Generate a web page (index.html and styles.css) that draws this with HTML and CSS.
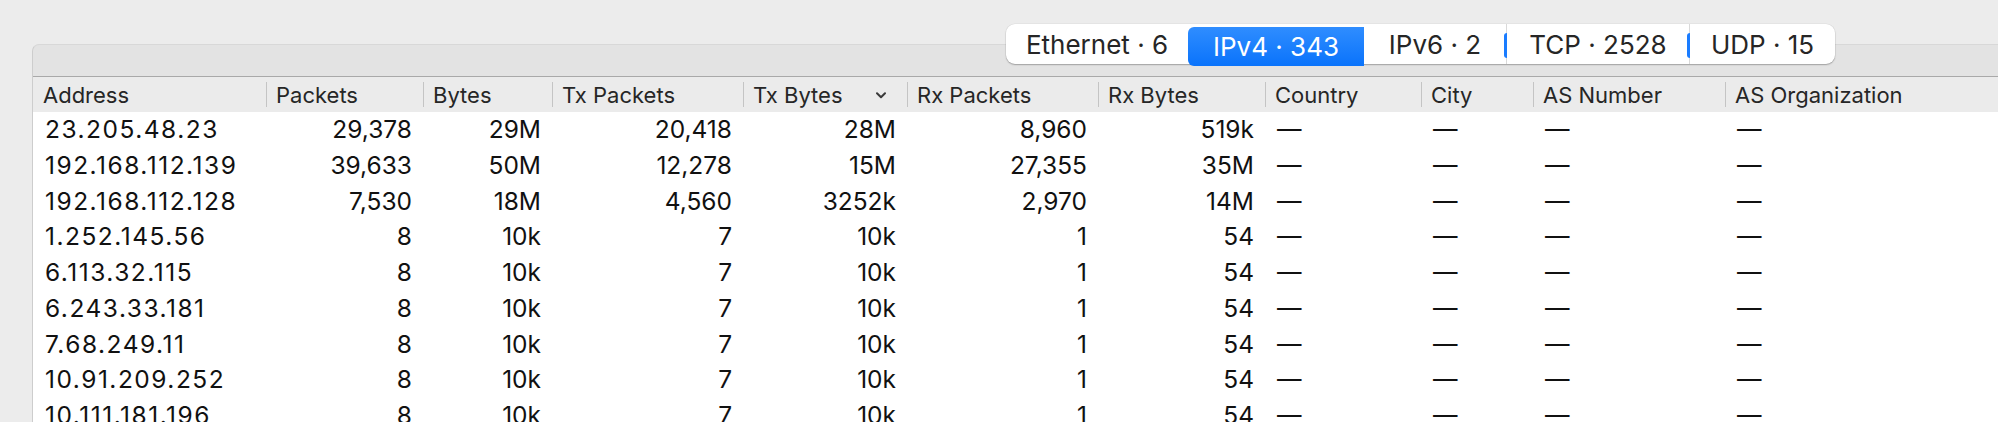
FILE: index.html
```html
<!DOCTYPE html>
<html>
<head>
<meta charset="utf-8">
<link rel="stylesheet" href="styles.css">
</head>
<body>
<div class="window">
  <div class="panel">
    <div class="toolbar">
      <div class="segmented">
        <div class="seg seg-eth">Ethernet · 6</div>
        <div class="seg seg-ipv4 selected">IPv4 · 343</div>
        <div class="seg seg-ipv6">IPv6 · 2</div>
        <div class="seg seg-tcp divided">TCP · 2528</div>
        <div class="seg seg-udp divided">UDP · 15</div>
      </div>
    </div>
    <div class="table">
      <div class="row head">
        <div class="hc first">Address</div>
        <div class="hc">Packets</div>
        <div class="hc">Bytes</div>
        <div class="hc">Tx Packets</div>
        <div class="hc sorted">Tx Bytes<svg class="chev" width="10" height="7" viewBox="0 0 10 7"><polyline points="1,1.2 5,5.2 9,1.2" fill="none" stroke="#3a3a3a" stroke-width="2" stroke-linecap="round" stroke-linejoin="round"/></svg></div>
        <div class="hc">Rx Packets</div>
        <div class="hc">Rx Bytes</div>
        <div class="hc">Country</div>
        <div class="hc">City</div>
        <div class="hc">AS Number</div>
        <div class="hc">AS Organization</div>
      </div>
      <div class="row">
        <div class="c txt addr">23.205.48.23</div><div class="c num">29,378</div><div class="c num">29M</div><div class="c num">20,418</div><div class="c num">28M</div><div class="c num">8,960</div><div class="c num">519k</div><div class="c txt">—</div><div class="c txt">—</div><div class="c txt">—</div><div class="c txt">—</div>
      </div>
      <div class="row">
        <div class="c txt addr">192.168.112.139</div><div class="c num">39,633</div><div class="c num">50M</div><div class="c num">12,278</div><div class="c num">15M</div><div class="c num">27,355</div><div class="c num">35M</div><div class="c txt">—</div><div class="c txt">—</div><div class="c txt">—</div><div class="c txt">—</div>
      </div>
      <div class="row">
        <div class="c txt addr">192.168.112.128</div><div class="c num">7,530</div><div class="c num">18M</div><div class="c num">4,560</div><div class="c num">3252k</div><div class="c num">2,970</div><div class="c num">14M</div><div class="c txt">—</div><div class="c txt">—</div><div class="c txt">—</div><div class="c txt">—</div>
      </div>
      <div class="row">
        <div class="c txt addr">1.252.145.56</div><div class="c num">8</div><div class="c num">10k</div><div class="c num">7</div><div class="c num">10k</div><div class="c num">1</div><div class="c num">54</div><div class="c txt">—</div><div class="c txt">—</div><div class="c txt">—</div><div class="c txt">—</div>
      </div>
      <div class="row">
        <div class="c txt addr">6.113.32.115</div><div class="c num">8</div><div class="c num">10k</div><div class="c num">7</div><div class="c num">10k</div><div class="c num">1</div><div class="c num">54</div><div class="c txt">—</div><div class="c txt">—</div><div class="c txt">—</div><div class="c txt">—</div>
      </div>
      <div class="row">
        <div class="c txt addr">6.243.33.181</div><div class="c num">8</div><div class="c num">10k</div><div class="c num">7</div><div class="c num">10k</div><div class="c num">1</div><div class="c num">54</div><div class="c txt">—</div><div class="c txt">—</div><div class="c txt">—</div><div class="c txt">—</div>
      </div>
      <div class="row">
        <div class="c txt addr">7.68.249.11</div><div class="c num">8</div><div class="c num">10k</div><div class="c num">7</div><div class="c num">10k</div><div class="c num">1</div><div class="c num">54</div><div class="c txt">—</div><div class="c txt">—</div><div class="c txt">—</div><div class="c txt">—</div>
      </div>
      <div class="row">
        <div class="c txt addr">10.91.209.252</div><div class="c num">8</div><div class="c num">10k</div><div class="c num">7</div><div class="c num">10k</div><div class="c num">1</div><div class="c num">54</div><div class="c txt">—</div><div class="c txt">—</div><div class="c txt">—</div><div class="c txt">—</div>
      </div>
      <div class="row">
        <div class="c txt addr">10.111.181.196</div><div class="c num">8</div><div class="c num">10k</div><div class="c num">7</div><div class="c num">10k</div><div class="c num">1</div><div class="c num">54</div><div class="c txt">—</div><div class="c txt">—</div><div class="c txt">—</div><div class="c txt">—</div>
      </div>
    </div>
  </div>
</div>
</body>
</html>
```

FILE: styles.css
```css
html, body {
  margin: 0;
  padding: 0;
}
body {
  background: #ececec;
  font-family: Inter, "Liberation Sans", Arial, sans-serif;
  color: #1a1a1a;
}
.window {
  width: 1998px;
  height: 422px;
  overflow: hidden;
  padding-top: 44px;
  box-sizing: border-box;
}
.panel {
  margin-left: 32px;
  border-left: 1px solid #cdcdcd;
  border-top: 1px solid #d8d8d8;
  border-top-left-radius: 7px;
  background: #e3e3e3;
}
.toolbar {
  height: 31px;
  display: flex;
  justify-content: flex-end;
  align-items: flex-start;
}
.segmented {
  margin-top: -21px;
  margin-right: 163px;
  height: 40px;
  display: flex;
  background: #ffffff;
  border-radius: 9px;
  box-shadow: 0 1px 1.5px rgba(0, 0, 0, 0.28), 0 0 0 0.5px rgba(0, 0, 0, 0.06);
}
.seg {
  height: 40px;
  display: flex;
  align-items: center;
  justify-content: center;
  font-size: 26px;
  color: #262626;
  white-space: nowrap;
  box-sizing: border-box;
  position: relative;
}
.seg-eth { width: 182px; }
.seg-ipv4 { width: 176px; }
.seg-ipv6 { width: 142px; }
.seg-tcp { width: 183px; }
.seg-udp { width: 146px; }
.seg.selected {
  margin-top: 3px;
  height: 39px;
  color: #ffffff;
  background: linear-gradient(#2f8dff, #0a73fb);
  border-radius: 6px 0 0 6px;
}
.seg.divided {
  border-left: 1px solid #d9d9d9;
}
.seg.divided::before {
  content: "";
  position: absolute;
  left: -3px;
  top: 9px;
  width: 3px;
  height: 25px;
  background: #1a7cff;
  border-radius: 3px 0 0 3px;
}
.table {
  border-top: 1px solid #a9a9a9;
  background: #ffffff;
}
.row {
  display: grid;
  grid-template-columns: 233px 157px 129px 191px 164px 191px 167px 156px 112px 192px 1fr;
  height: 35.75px;
}
.row.head {
  height: 35px;
  background: #ebebeb;
}
.hc {
  display: flex;
  align-items: center;
  padding-left: 10px;
  font-size: 22px;
  color: #262626;
  white-space: nowrap;
  background-image: linear-gradient(#c4c4c4, #c4c4c4);
  background-size: 1px 25px;
  background-repeat: no-repeat;
  background-position: 0 center;
}
.hc.first {
  background-image: none;
}
.hc.sorted {
  justify-content: space-between;
  padding-right: 21px;
}
.chev {
  display: block;
  margin-top: 2px;
}
.c {
  font-size: 24.5px;
  line-height: 35.75px;
  white-space: nowrap;
  color: #111111;
}
.c.num {
  text-align: right;
  padding-right: 11px;
}
.c.txt {
  padding-left: 12px;
}
.c.addr {
  letter-spacing: 1.5px;
}
```
